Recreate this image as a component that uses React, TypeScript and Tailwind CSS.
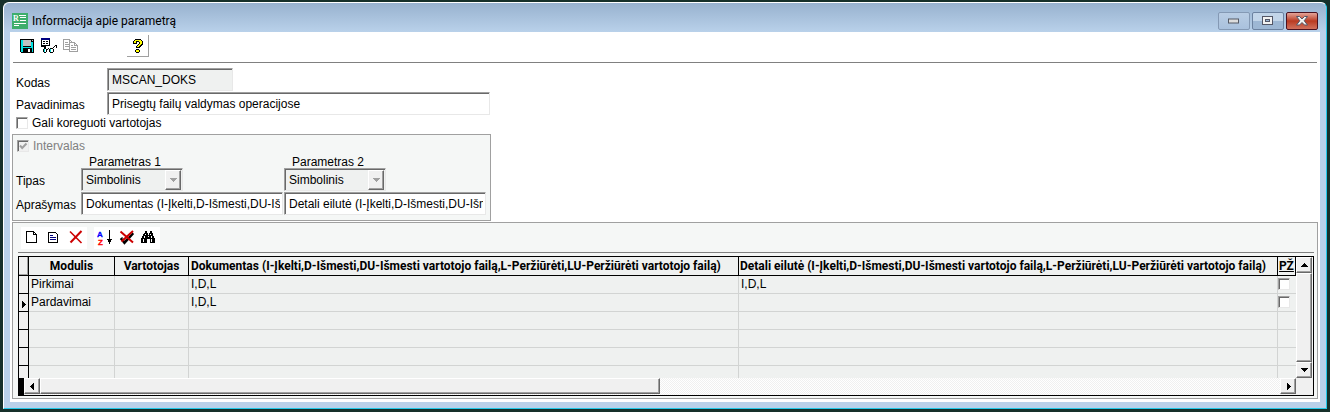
import React, { useState } from 'react';
import clsx from 'clsx';

const SUNKEN = 'border border-t-[#a0a0a0] border-l-[#a0a0a0] border-r-[#e8e8e8] border-b-[#e8e8e8] shadow-[inset_1px_1px_0_#696969]';
const RAISED = 'border border-t-white border-l-white border-r-[#696969] border-b-[#696969] shadow-[inset_-1px_-1px_0_#a0a0a0] bg-[#f0f0f0]';
const TRACK = 'bg-[repeating-conic-gradient(#ffffff_0%_25%,#f0f0f0_0%_50%)] bg-[size:2px_2px]';

interface Row {
  modulis: string;
  vartotojas: string;
  dokumentas: string;
  detali: string;
  pz: boolean;
}

const rows: Row[] = [
  { modulis: 'Pirkimai', vartotojas: '', dokumentas: 'I,D,L', detali: 'I,D,L', pz: false },
  { modulis: 'Pardavimai', vartotojas: '', dokumentas: 'I,D,L', detali: '', pz: false },
];

const params = [
  { id: 'param1', title: 'Parametras 1', text: 'Dokumentas (I-Įkelti,D-Išmesti,DU-Išmesti vartotojo failą)' },
  { id: 'param2', title: 'Parametras 2', text: 'Detali eilutė (I-Įkelti,D-Išmesti,DU-Išmesti vartotojo failą)' },
];

const Icon: React.FC<{ children: React.ReactNode; w?: number; h?: number }> = ({ children, w = 16, h = 16 }) => (
  <svg width={w} height={h} viewBox={`0 0 ${w} ${h}`} shapeRendering="crispEdges" aria-hidden="true">
    {children}
  </svg>
);

const AppIcon = () => (
  <Icon>
    <rect width="16" height="16" fill="#3dae6c" />
    <text x="1" y="8" fontSize="8" fontWeight="bold" fill="#fff" fontFamily="Liberation Serif, serif">R</text>
    <path d="M7 2h7v1H7zM8 4h6v1H8zM8 7h6v1H8zM2 10h12v1H2zM2 12h5v1H2z" fill="#fff" />
  </Icon>
);

const SaveIcon = () => (
  <Icon>
    <path d="M1 1h14v14H2v-1H1z" fill="#000" />
    <path d="M2 2h2v7h8V4h2v10h-1v-4H4v4H2z" fill="#00e0e0" />
    <path d="M4 2h8v6H4z" fill="#c0c0c0" />
    <path d="M13 2h1v1h-1z" fill="#c0c0c0" />
    <path d="M9 11h2v3H9z" fill="#fff" />
  </Icon>
);

const PreviewIcon = () => (
  <Icon w={17}>
    <path d="M0 0h9v9H0z" fill="#000" />
    <path d="M0 0h9v2H0z" fill="#000080" />
    <path d="M1 2h7v5H1z" fill="#fff" />
    <path d="M2 3h2v1H2zM5 3h2v1H5zM2 5h2v1H2zM5 5h2v1H5z" fill="#000" />
    <path d="M3 8h6v2H3z" fill="#fff" />
    <path d="M3 8h2v2H3zM3 10h2v1H3zM2 11h1v3H2zM5 11h1v3H5zM3 14h2v1H3zM6 11h1v-1h1v1H7v1H6zM9 10h3v1H9zM8 11h1v3H8zM12 11h1v3h-1zM9 14h3v1H9zM12 9h1v1h-1zM13 8h1v1h-1zM14 7h2v1h-2zM15 8h1v2h-1z" fill="#000" />
    <path d="M3 11h1v3H3zM9 11h1v3H9z" fill="#00e0e0" />
  </Icon>
);

const CopyIcon = () => (
  <Icon>
    <path d="M.5 1.5h6l3 3v7h-9zM6.500 1.500v3h3M2 4.500h3M2 6.500h4M2 8.500h4" fill="#fff" stroke="#a0a0a0" />
    <path d="M6.500 4.500h5l3 3v6h-8zM11.500 4.500v3h3M8 7.500h2M8 9.500h5M8 11.500h5" fill="#fff" stroke="#a0a0a0" />
  </Icon>
);

const HelpIcon = () => (
  <Icon>
    <path d="M5 1h6v1h1v1h1v4h-1v1h-1v1h-1v1H6V8h1V7h1V6h1V4H7v2H3V3h1V2h1zM6 11h3v1h1v2H9v1H6v-1H5v-2h1z" fill="#000" />
    <path d="M5 2h6v1h1v3h-1v1h-1v1H9v1H7V8h1V7h1V6h1V4H9V3H6v2H4V3h1zM6 12h3v2H6z" fill="#ffff00" />
  </Icon>
);

const NewIcon = () => (
  <Icon>
    <path d="M2.500 1.500h7l3 3v8h-10zM9.500 1.500v3h3" fill="#fff" stroke="#000" />
  </Icon>
);

const DetailIcon = () => (
  <Icon>
    <path d="M2.500 2.500h7l2 2v8h-9z" fill="#fff" stroke="#000" />
    <path d="M4 5h3v1H4zM4 7h6v1H4zM4 9h6v1H4z" fill="#000080" />
  </Icon>
);

const DeleteIcon = () => (
  <Icon>
    <g shapeRendering="auto" stroke="#cc0000" fill="none">
      <path d="M2 1.500 13.500 13" strokeWidth="1.600" />
      <path d="M13.500 1 2.500 12.500" strokeWidth="2" />
    </g>
  </Icon>
);

const SortIcon = () => (
  <Icon>
    <text x="0" y="7" fontSize="8" fontWeight="bold" fill="#0000ff" stroke="#0000ff" strokeWidth=".3" fontFamily="Liberation Sans, sans-serif">A</text>
    <text x="1" y="15" fontSize="8" fontWeight="bold" fill="#ff0000" stroke="#ff0000" strokeWidth=".3" fontFamily="Liberation Sans, sans-serif">Z</text>
    <path d="M12 0h1v9h2v1h-1v2h-1v2h-1v-2h-1v-2h-1V9h2z" fill="#000" />
  </Icon>
);

const UnmarkIcon = () => (
  <Icon>
    <g shapeRendering="auto" fill="none">
      <path d="M2 8l3.500 4.500L14 3" stroke="#000" strokeWidth="3" />
      <path d="M3 7.500l2.500 3L13 3" stroke="#808080" strokeWidth="1" />
      <path d="M1.500 1.500 14 12.500M14 1 2.500 11.500" stroke="#cc0000" strokeWidth="2" />
    </g>
  </Icon>
);

const FindIcon = () => (
  <Icon>
    <path d="M4 1h2v2h1v2h1V3h1V1h2v2h1v3h1v2h1v5h-1v-0H9V9H6v4H0V8h1V6h1V4h1V3h1z" fill="#000" />
    <path d="M4 4h1v1H4zM3 6h1v2H3zM2 9h1v3H2zM9 4h1v1H9zM10 6h1v2h-1zM10 9h1v3h-1zM7 6h1v1H7z" fill="#fff" />
  </Icon>
);

const arrowPaths = {
  up: 'M4 2h1v1h1v1h1v1h1v1H1V5h1V4h1V3h1z',
  down: 'M1 2h7v1H7v1H6v1H5v1H4V5H3V4H2V3H1z',
  left: 'M5 1h1v7H5V7H4V6H3V5H2V4h1V3h1V2h1z',
  right: 'M3 1h1v1h1v1h1v1h1v1H6v1H5v1H4v1H3z',
};

const Arrow: React.FC<{ dir: keyof typeof arrowPaths; color?: string }> = ({ dir, color = '#000' }) => (
  <Icon w={9} h={9}>
    <path d={arrowPaths[dir]} fill={color} />
  </Icon>
);

const ScrollButton: React.FC<{ dir: keyof typeof arrowPaths; label: string }> = ({ dir, label }) => (
  <button type="button" aria-label={label} className={clsx('flex h-4 w-4 shrink-0 items-center justify-center', RAISED)}>
    <Arrow dir={dir} />
  </button>
);

const CheckBox: React.FC<{ id: string; checked: boolean; disabled?: boolean; label?: string; onChange?: () => void }> = ({
  id,
  checked,
  disabled,
  label,
  onChange,
}) => (
  <span className="relative flex h-3 w-3 shrink-0">
    <input
      id={id}
      type="checkbox"
      aria-label={label}
      checked={checked}
      disabled={disabled}
      onChange={onChange}
      className={clsx('h-3 w-3 appearance-none', SUNKEN, disabled ? 'bg-[#f0f0f0]' : 'bg-white')}
    />
    {checked && (
      <svg width="12" height="12" viewBox="0 0 12 12" className="pointer-events-none absolute top-0 left-0">
        <path d="M3 5.500l2.200 2.500L9.500 3.500" fill="none" stroke="#a0a0a0" strokeWidth="2" />
      </svg>
    )}
  </span>
);

const WindowButtons = () => (
  <div className="flex gap-0.5">
    <button type="button" aria-label="Minimize" className="flex h-[18px] w-8 items-center justify-center rounded-xs border border-[#8499b4] bg-linear-to-b from-[#b9cde4] to-[#a9c1dd]">
      <svg width="12" height="6" viewBox="0 0 12 6"><rect x=".5" y="1" width="10" height="4" fill="#ddd" stroke="#555a66" /></svg>
    </button>
    <button type="button" aria-label="Maximize" className="flex h-[18px] w-8 items-center justify-center rounded-xs border border-[#6c82a0] bg-linear-to-b from-[#c2d5e9] from-50% to-[#9db7d4] to-50%">
      <svg width="12" height="10" viewBox="0 0 12 10">
        <rect x=".5" y=".5" width="10" height="8" fill="#f2f2f2" stroke="#535666" />
        <rect x="3.500" y="3.500" width="4" height="2" fill="#9db7d4" stroke="#535666" />
      </svg>
    </button>
    <button type="button" aria-label="Close" className="flex h-[18px] w-8 items-center justify-center rounded-xs border border-[#4a1220] bg-linear-to-b from-[#e3a398] via-[#b93a21] via-50% to-[#d0705c]">
      <svg width="14" height="10" viewBox="0 0 14 10">
        <path d="M1.500.500h3L7 3 9.500.500h3L9.200 4.750 12.500 9h-3L7 6.500 4.500 9h-3l3.300-4.250z" fill="#f2f2f2" stroke="#535666" />
      </svg>
    </button>
  </div>
);

const ToolButton: React.FC<{ label: string; className?: string; disabled?: boolean; children: React.ReactNode }> = ({
  label,
  className,
  disabled,
  children,
}) => (
  <button type="button" aria-label={label} disabled={disabled} className={clsx('flex h-[22px] w-[22px] items-center justify-center bg-white', className)}>
    {children}
  </button>
);

const HEAD = "h-[19px] overflow-hidden border-r border-b border-black p-0 font-[Roboto,'Liberation_Sans',sans-serif] text-[12px] leading-[18px] font-bold whitespace-nowrap";
const CELL = 'h-[18px] overflow-hidden border-r border-b border-[#d2d4d3] p-0 pl-0.5 text-[12px] leading-[17px] whitespace-nowrap';

const DataGrid: React.FC = () => {
  const [data, setData] = useState(rows);

  const togglePz = (index: number) => {
    setData(prev => prev.map((row, i) => (i === index ? { ...row, pz: !row.pz } : row)));
  };

  return (
    <div className="border border-black bg-[#eff1f0]">
      <div className="flex">
        <div className="h-[121px] min-w-0 flex-1 overflow-hidden">
          <table className="w-full table-fixed border-separate border-spacing-0">
            <colgroup>
              <col className="w-[10px]" />
              <col className="w-[86px]" />
              <col className="w-[74px]" />
              <col className="w-[550px]" />
              <col />
              <col className="w-[18px]" />
            </colgroup>
            <thead>
              <tr>
                <th className={clsx(HEAD, 'bg-[#f0f0f0] shadow-[inset_-1px_-1px_0_#a0a0a0]')} />
                <th className={HEAD}>Modulis</th>
                <th className={HEAD}>Vartotojas</th>
                <th className={clsx(HEAD, 'pl-0.5 text-left')}>
                  Dokumentas (I-Įkelti,D-Išmesti,DU-Išmesti vartotojo failą,L-Peržiūrėti,LU-Peržiūrėti vartotojo failą)
                </th>
                <th className={clsx(HEAD, 'pl-px text-left')}>
                  Detali eilutė (I-Įkelti,D-Išmesti,DU-Išmesti vartotojo failą,L-Peržiūrėti,LU-Peržiūrėti vartotojo failą)
                </th>
                <th className={clsx(HEAD, 'underline')}>PŽ</th>
              </tr>
            </thead>
            <tbody>
              {data.map((row, i) => (
                <tr key={row.modulis}>
                  <td className="h-[18px] border-r border-b border-black bg-[#f0f0f0] p-0 pt-1">
                    {i === 1 && <Arrow dir="right" />}
                  </td>
                  <td className={CELL}>{row.modulis}</td>
                  <td className={CELL}>{row.vartotojas}</td>
                  <td className={CELL}>{row.dokumentas}</td>
                  <td className={CELL}>{row.detali}</td>
                  <td className="h-[18px] border-b border-[#d2d4d3] p-0 pt-0.5 align-top">
                    <CheckBox id={`pz-${i}`} label="PŽ" checked={row.pz} onChange={() => togglePz(i)} />
                  </td>
                </tr>
              ))}
              {[0, 1, 2, 3].map(i => (
                <tr key={i}>
                  <td className="h-[18px] border-r border-b border-black bg-[#f0f0f0] p-0" />
                  <td className={CELL} />
                  <td className={CELL} />
                  <td className={CELL} />
                  <td className={CELL} />
                  <td className="h-[18px] border-b border-[#d2d4d3] p-0" />
                </tr>
              ))}
            </tbody>
          </table>
        </div>
        <div className="flex w-[17px] flex-col items-start bg-[#f7f7f7]">
          <ScrollButton dir="up" label="Aukštyn" />
          <div className={clsx('w-4 flex-1', RAISED)} />
          <ScrollButton dir="down" label="Žemyn" />
        </div>
      </div>
      <div className="flex h-[17px] bg-[#f0f0f0]">
        <div className="w-[5px] bg-black" />
        <ScrollButton dir="left" label="Kairėn" />
        <div className={clsx('flex-1', TRACK)}>
          <div className={clsx('h-4 w-1/2', RAISED)} />
        </div>
        <ScrollButton dir="right" label="Dešinėn" />
        <div className="w-[17px]" />
      </div>
    </div>
  );
};

const App: React.FC = () => {
  const [name, setName] = useState('Prisegtų failų valdymas operacijose');
  const [editable, setEditable] = useState(false);

  return (
    <div className="min-h-screen bg-[#16302a] px-[3px] pt-0.5 pb-[3px] font-['Liberation_Sans',Arial,sans-serif] text-[12px] leading-[14px] text-black">
      <div className="rounded-t-md border border-t-white border-r-[#22c8e8] border-b-[#22c8e8] border-l-white bg-[#b9d1ea] px-1.5 pb-1.5">
        <header className="-mx-1.5 flex h-[29px] items-center justify-between rounded-t-md bg-linear-to-b from-[#98b2cf] to-[#b9d1ea] pr-2 pl-2">
          <div className="flex items-center gap-1 pt-1.5">
            <AppIcon />
            <h1 className="font-[Roboto,'Open_Sans',sans-serif] text-[12px] leading-4">Informacija apie parametrą</h1>
          </div>
          <div className="pt-1.5">
            <WindowButtons />
          </div>
        </header>

        <main className="bg-white pr-0.5 pb-[3px] pl-0.5">
          <div className="mx-px flex h-[31px] items-start border-b border-[#808080] pt-[3px] pl-[3px]">
            <ToolButton label="Išsaugoti"><SaveIcon /></ToolButton>
            <ToolButton label="Peržiūra"><PreviewIcon /></ToolButton>
            <ToolButton label="Kopijuoti" disabled><CopyIcon /></ToolButton>
            <ToolButton label="Pagalba" className="ml-[45px] border-r border-b border-[#a0a0a0]"><HelpIcon /></ToolButton>
          </div>

          <form className="flex flex-col items-start pt-[5px]" onSubmit={e => e.preventDefault()}>
            <div className="grid grid-cols-[91px_383px] items-center gap-y-px pl-1">
              <label htmlFor="kodas" className="pt-1.5">Kodas</label>
              <input id="kodas" readOnly value="MSCAN_DOKS" className={clsx('h-[23px] w-[126px] bg-[#eff1f0] px-1 outline-none', SUNKEN)} />
              <label htmlFor="pavadinimas" className="pt-0.5">Pavadinimas</label>
              <input
                id="pavadinimas"
                value={name}
                onChange={e => setName(e.target.value)}
                className={clsx('h-[23px] w-full bg-white px-1 outline-none', SUNKEN)}
              />
            </div>
            <label htmlFor="koreguoti" className="mb-[3px] flex h-4 items-center gap-1 pl-1">
              <CheckBox id="koreguoti" checked={editable} onChange={() => setEditable(!editable)} />
              Gali koreguoti vartotojas
            </label>

            <fieldset className="border border-[#a0a0a0] bg-[#f5f7f6] pr-1 pb-[5px] pl-[3px]">
              <label htmlFor="intervalas" className="flex h-5 items-center gap-1 pt-0.5 pl-px text-[#808080]">
                <CheckBox id="intervalas" checked disabled />
                Intervalas
              </label>
              <div className="grid grid-cols-[64px_202px_202px] items-center gap-x-px gap-y-px">
                <span />
                {params.map(p => (
                  <span key={p.id} className="h-3 pl-2 leading-[14px]">{p.title}</span>
                ))}
                <label htmlFor="param1-tipas" className="pt-0.5">Tipas</label>
                {params.map(p => (
                  <div key={p.id} className="relative w-[102px]">
                    <select
                      id={`${p.id}-tipas`}
                      aria-label={`Tipas, ${p.title}`}
                      disabled
                      className={clsx('h-[23px] w-full appearance-none bg-[#eff1f0] px-1 opacity-100', SUNKEN)}
                    >
                      <option>Simbolinis</option>
                    </select>
                    <span className={clsx('pointer-events-none absolute top-0.5 right-0.5 flex h-5 w-4 items-center justify-center', RAISED)}>
                      <Arrow dir="down" color="#a0a0a0" />
                    </span>
                  </div>
                ))}
                <label htmlFor="param1-aprasymas" className="pt-0.5">Aprašymas</label>
                {params.map(p => (
                  <input
                    key={p.id}
                    id={`${p.id}-aprasymas`}
                    aria-label={`Aprašymas, ${p.title}`}
                    readOnly
                    value={p.text}
                    className={clsx('h-[23px] w-full bg-white pr-0.5 pl-1 outline-none', SUNKEN)}
                  />
                ))}
              </div>
            </fieldset>
          </form>

          <section className="mt-px border border-[#a0a0a0] bg-[#f5f7f6] pt-1 pr-[3px] pb-0.5 pl-[5px]">
            <div className="flex gap-[7px] border-b border-[#808080] pb-[3px] pl-[3px]">
              <div className="flex">
                <ToolButton label="Naujas"><NewIcon /></ToolButton>
                <ToolButton label="Redaguoti"><DetailIcon /></ToolButton>
                <ToolButton label="Šalinti"><DeleteIcon /></ToolButton>
              </div>
              <div className="flex">
                <ToolButton label="Rūšiuoti"><SortIcon /></ToolButton>
                <ToolButton label="Atžymėti"><UnmarkIcon /></ToolButton>
                <ToolButton label="Ieškoti"><FindIcon /></ToolButton>
              </div>
            </div>
            <div className="pt-[3px]">
              <DataGrid />
            </div>
          </section>
        </main>
      </div>
    </div>
  );
};

export default App;
